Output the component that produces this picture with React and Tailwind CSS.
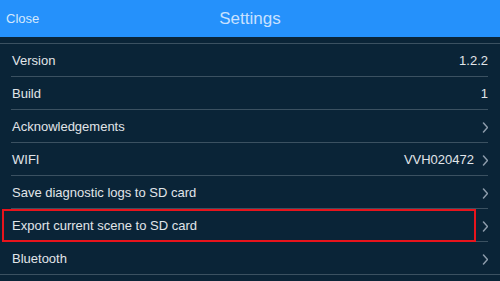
import React from "react";

function Chevron() {
  return (
    <svg width="6" height="11" viewBox="0 0 6 11" className="ml-[8px] shrink-0">
      <path d="M1.5 1 L5.5 5.5 L1.5 10" fill="none" stroke="#8d9cab" strokeWidth="1.5" strokeLinecap="round" strokeLinejoin="round" />
    </svg>
  );
}

function Row({ label, value, chevron, last, highlight }) {
  return (
    <div className="relative">
      <div
        className={
          last
            ? "ml-[11px] mr-[12px] h-[32px] pt-[2px] flex items-center justify-between pl-[1px]"
            : "ml-[11px] mr-[12px] h-[33px] pt-[2px] flex items-center justify-between pl-[1px] border-b border-[#3b5161]"
        }
      >
        <span className="text-[13px] text-[#e1e5e9]">{label}</span>
        <span className="flex items-center">
          {value && <span className="text-[13px] text-[#e1e5e9]">{value}</span>}
          {chevron && <Chevron />}
        </span>
      </div>
      {highlight && (
        <div className="absolute left-[2px] top-0 w-[474px] h-[33px] border-2 border-[#e8141c]" />
      )}
    </div>
  );
}

export default function App() {
  return (
    <div
      className="w-[500px] h-[281px] bg-[#0a2437] overflow-hidden"
      style={{ fontFamily: '"Liberation Sans", Arial, sans-serif' }}
    >
      <div className="relative h-[37px] bg-[#2591fb] flex items-center justify-center">
        <span className="absolute left-[6px] text-[13px] text-[#d3e8fd]">Close</span>
        <span className="text-[17px] text-[#c9e1ff]">Settings</span>
      </div>
      <div className="h-[6px]" />
      <div className="border-t border-b border-[#3b5161]">
        <Row label="Version" value="1.2.2" />
        <Row label="Build" value="1" />
        <Row label="Acknowledgements" chevron />
        <Row label="WIFI" value="VVH020472" chevron />
        <Row label="Save diagnostic logs to SD card" chevron />
        <Row label="Export current scene to SD card" chevron highlight />
        <Row label="Bluetooth" chevron last />
      </div>
    </div>
  );
}
